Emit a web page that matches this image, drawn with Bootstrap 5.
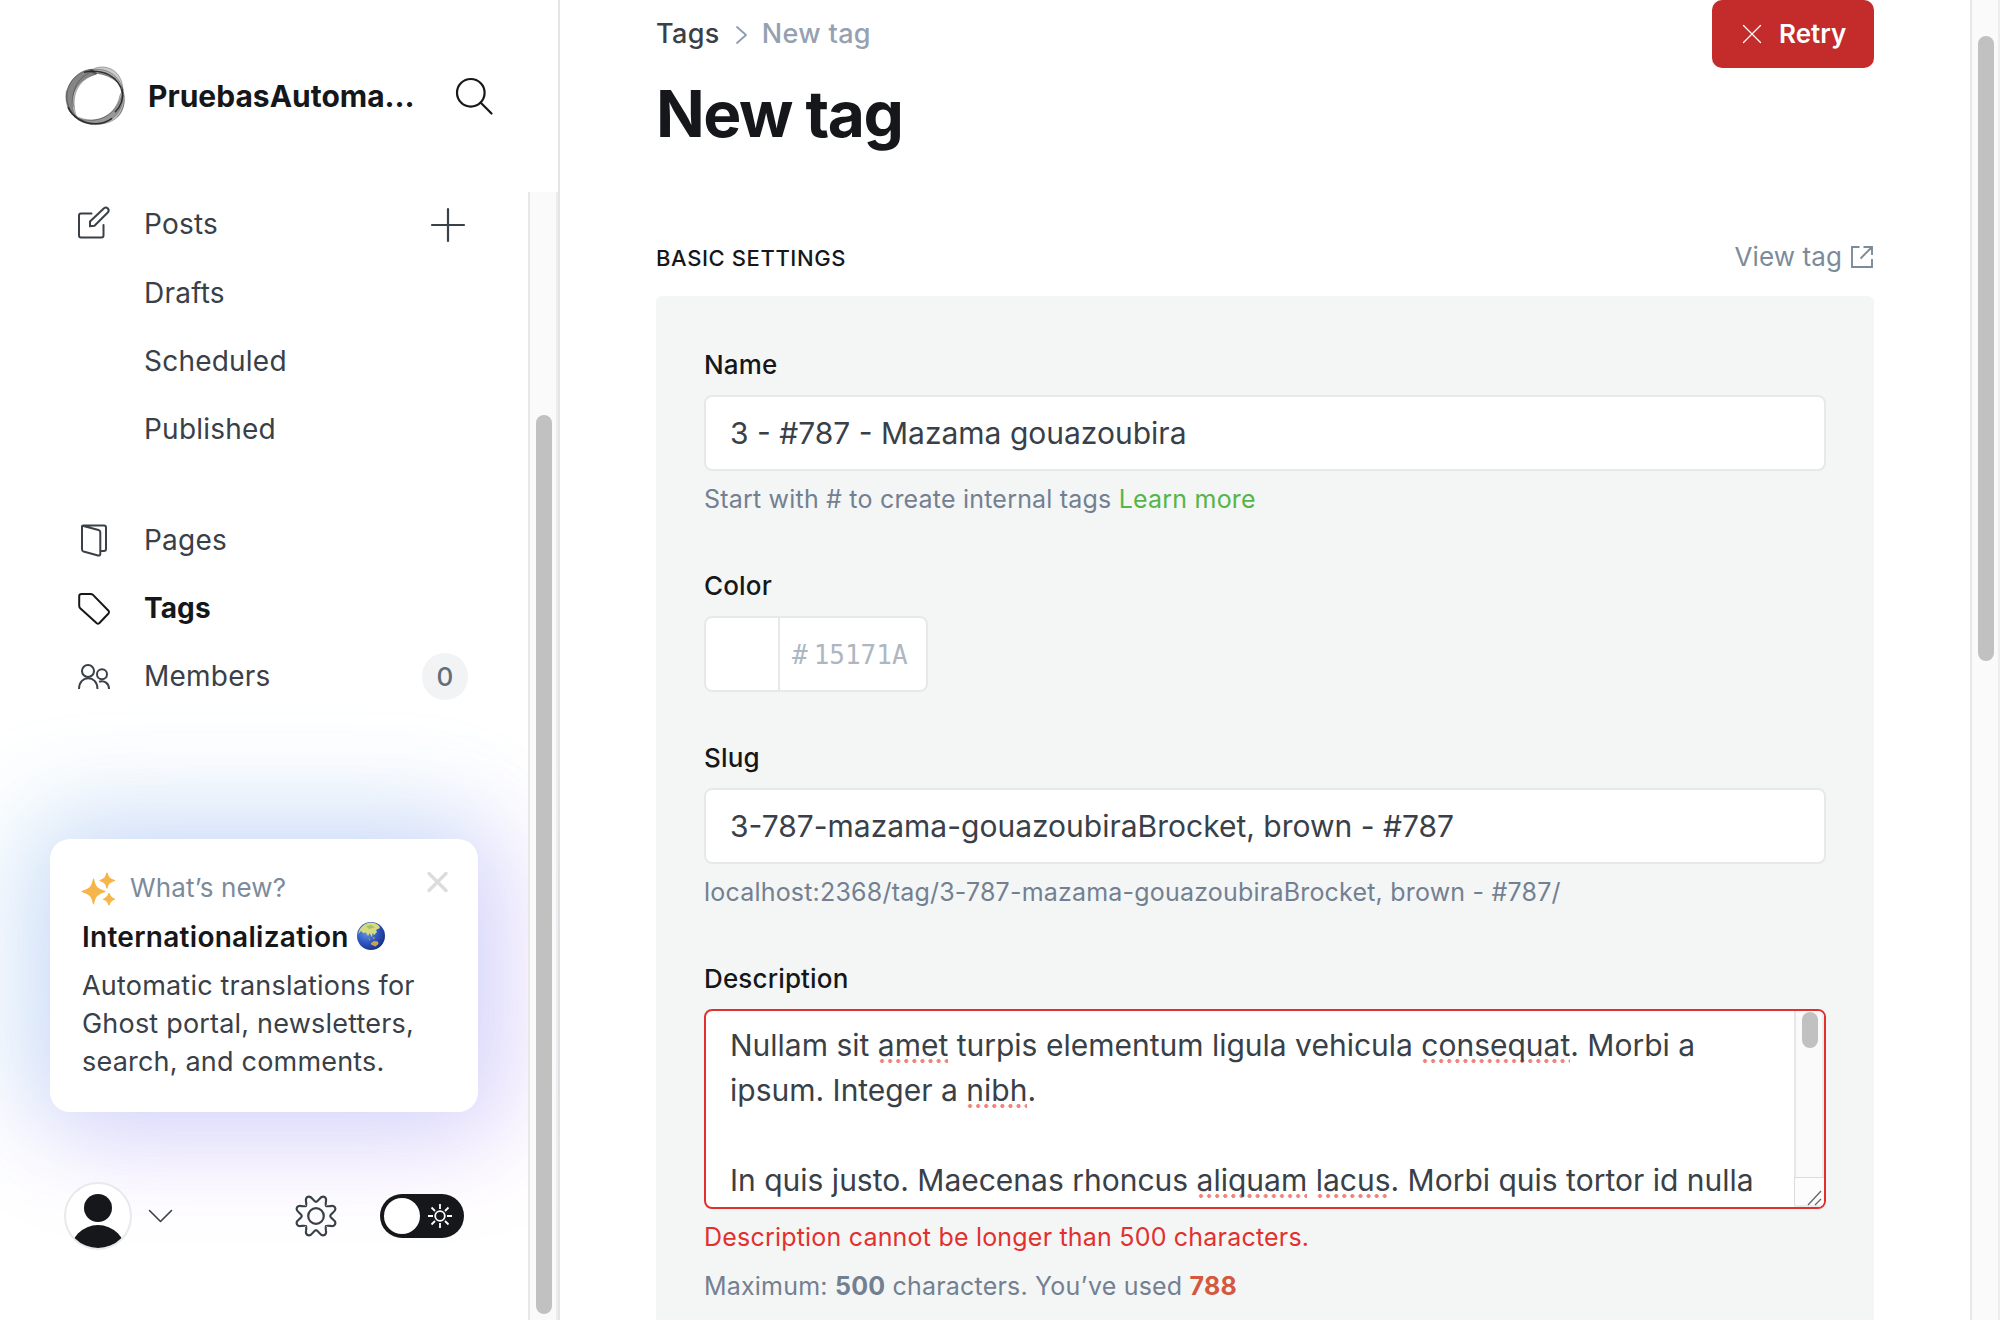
<!DOCTYPE html>
<html lang="en">
<head>
<meta charset="utf-8">
<meta name="viewport" content="width=device-width, initial-scale=1">
<title>New tag</title>
<link href="https://cdn.jsdelivr.net/npm/bootstrap@5.3.0/dist/css/bootstrap.min.css" rel="stylesheet">
<style>
body{font-family:Inter,"Liberation Sans",sans-serif;color:#394047;background:#fff;overflow:hidden;font-size:28px;-webkit-font-smoothing:antialiased}
svg{display:block;flex:none;overflow:visible}
a{text-decoration:none}
.ink{color:#15171a}
.shell{height:1320px;width:2000px}
.side{width:560px;border-right:2px solid #e5e5e5}
.side-head{height:192px;padding:66px 64px 0 65px}
.site-name{font-size:30px;font-weight:700;line-height:60px;margin-left:23px;width:308px;white-space:nowrap}
.search-icon{margin-top:12px}
.side-col{width:528px}
.nav-list{margin-top:-2px}
.nav-row{height:68px;padding:0 62px 0 78px}
.nav-row .nav-text{width:320px;line-height:70px;letter-spacing:.22px}
.nav-row svg{width:32px;margin-right:34px}
.nav-row svg.plus-icon{width:34px;margin-right:1px}
.nav-row.sub{padding-left:144px}
.nav-gap{margin-top:44px}
.nav-row .nav-text.active-text{letter-spacing:.1px}
.count{width:46px;height:47px;border-radius:24px;background:#f1f3f4;color:#626d79;font-size:26px;font-weight:500;line-height:47px}
.track{background:#fafafa;border-left:2px solid #e8e8e8;border-right:2px solid #ededed;width:30px;position:relative;z-index:1}
.thumb{width:16px;border-radius:8px;background:#c1c1c1}
.side-thumb{margin:223px 0 0 6px;height:899px}
.main-thumb{margin:36px 0 0 6px;height:625px}
.news{margin:129px 50px 0;width:428px;height:273px;border-radius:20px;background:#fff;padding:29px 30px 0 32px;box-shadow:-14px -12px 100px 16px rgba(85,215,226,.24),14px 12px 100px 16px rgba(196,105,250,.28)}
.news-kicker{font-size:26px;line-height:40px;height:38px;color:#7c8b9a;letter-spacing:.15px;margin-left:15px}
.news-title{font-size:28px;line-height:40px;height:38px;font-weight:600;letter-spacing:.28px;margin-top:12px}
.news-body{font-size:27px;line-height:38px;letter-spacing:.2px;margin-top:11px}
.foot{margin-top:70px;padding-left:64px;height:68px}
.avatar{width:68px;height:68px}
.switch{width:84px;height:44px;border-radius:22px;background:#15171a;padding:4px}
.knob{width:36px;height:36px;border-radius:50%;background:#fff}
.main-pane{width:1410px;padding:0 96px;overflow:hidden;position:relative;background:#fff}
.crumbs{height:66px;line-height:67px;font-size:27px;font-weight:500;letter-spacing:.35px}
.page-title{font-size:64px;line-height:72px;font-weight:700;letter-spacing:-1.5px;margin:12px 0 0}
.btn-retry{width:162px;height:68px;border-radius:10px;background:#c42b2b;color:#fff;font-size:26px;font-weight:600;padding:0 28px 1px 31px}
.btn-retry:hover{background:#c42b2b;color:#fff}
.head-block{height:150px;margin-bottom:88px}
.sec-head{height:40px;margin-bottom:18px}
.sec-title{font-size:22px;font-weight:500;line-height:40px;letter-spacing:.6px}
.view-link{font-size:26px;line-height:38px;color:#7c8b9a;letter-spacing:.1px}
.panel{background:#f4f6f6;border-radius:6px;padding:54px 48px 0;height:1100px}
.f-label{font-size:26px;line-height:30px;font-weight:500;color:#15171a;margin:0 0 15px;display:block;letter-spacing:.15px}
.f-label.next{margin-top:53px}
.field{display:block;height:76px;border:2px solid #e5e9ea;border-radius:8px;background:#fff;color:#394047;font-size:30px;padding:0 24px;line-height:72px;width:100%}
.field:focus{outline:0}
.help{font-size:25px;line-height:38px;color:#738091;margin:9px 0 0;letter-spacing:.2px}
.help.tally{margin-top:11px}
.color-box{width:224px;height:76px;border:2px solid #e5e9ea;border-radius:8px;background:#fff;margin-bottom:51px}
.swatch{width:74px;border-right:2px solid #e5e9ea}
.hex{font-family:"DejaVu Sans Mono",monospace;font-size:26px;line-height:74px;color:#aeb7c1;padding-left:12px;gap:6px}
.area{height:200px;border:2px solid #e2302f;border-radius:8px;background:#fff;overflow:hidden}
.area-text{font-size:30px;line-height:45px;padding:12px 0 0 24px;white-space:nowrap;width:1088px}
.sp{background:radial-gradient(circle at 4px 2px,#f2837a 1.7px,transparent 2.3px) 0 100%/8.1px 4px repeat-x;padding-bottom:0}
.area-bar{width:30px}
.area-bar .thumb{margin:1px 0 0 6px;height:36px}
.area-track{height:166px;border-left:2px solid #e8e8e8;border-right:2px solid #ededed;background:#fafafa}
.area-grip{border-left:1px solid #dcdcdc;border-top:1px solid #dcdcdc;border-bottom:2px solid #ededed;background:#fcfcfc;padding-right:2px}
</style>
<script src="https://cdn.jsdelivr.net/npm/bootstrap@5.3.0/dist/js/bootstrap.bundle.min.js"></script>
</head>
<body>
<div class="shell d-flex">
  <aside class="side d-flex flex-column flex-shrink-0">
    <div class="side-head d-flex align-items-start">
      <svg width="60" height="60" viewBox="0 .7 60 60" fill="#444" stroke="#222" stroke-opacity=".55" stroke-width=".6">
        <path fill-opacity=".5" d="M27 4C12 6 .5 18 1 34 2 44 6 49 11 52 3 38 7 14 32 8.500Z"/>
        <path fill-opacity=".3" d="M27 4C16 4 3 14 2 30 2 42 6 47 12 52 8 44 4 17 31 9Z"/>
        <path fill-opacity=".28" d="M26 5C36-2 57 1 58 25 54 16 44 9 27 7Z"/>
        <path fill-opacity=".18" d="M24 5.500C37 1 53 7 58 24 50 11 40 8 28 8Z"/>
        <path fill-opacity=".36" d="M57.500 25C62 41 57 57 34 59 22 60 14 56 9 51 24 60 50 55 55 30Z"/>
        <path fill-opacity=".3" d="M57.500 27C60 41 52 50 46 54 34 61 19 59 8 49 26 61 52 54 57.500 27Z"/>
        <path fill="none" stroke-opacity=".9" stroke-width="1.500" d="M19 7C38 3 54 11 57.500 28M3 42C7 52 19 59 31 58.500 37 58.500 43 56 47 53M57.500 24C58.500 32 56 41 50 47"/>
        <path fill="none" d="M1.500 25C0 33 3 43 9 50M9 42C5 28 12 12 26 7M58 26C62 35 58 45 52 52"/>
      </svg>
      <div class="site-name ink">PruebasAutoma…</div>
      <svg class="search-icon" width="36" height="37" viewBox="0 0 36 37" fill="none" stroke="#15171a" stroke-width="2.200"><circle cx="14.800" cy="14.800" r="13.800"/><path d="M24.800 24.800 35.500 35.500" stroke-linecap="round"/></svg>
    </div>
    <div class="d-flex flex-grow-1">
      <div class="side-col">
        <nav class="nav-list">
          <div class="nav-row d-flex align-items-center">
            <svg height="32" viewBox="0 1.500 32 32" fill="none" stroke="#394047" stroke-width="2" stroke-linecap="round" stroke-linejoin="round"><path d="M13.500 7H3Q1 7 1 9V29Q1 31 3 31H23.500Q25.500 31 25.500 29V18.500M12 15 26 1.700Q28 .3 29.800 2 31.500 4 30 5.800L16.500 19.300 12 19.800Z"/></svg>
            <span class="nav-text">Posts</span>
            <svg class="plus-icon ms-auto" height="34" viewBox="0 0 34 34" stroke="#394047" stroke-width="2.200" stroke-linecap="round"><path d="M1 18H33M17 2V34"/></svg>
          </div>
          <div class="nav-row sub"><span class="nav-text">Drafts</span></div>
          <div class="nav-row sub"><span class="nav-text">Scheduled</span></div>
          <div class="nav-row sub"><span class="nav-text">Published</span></div>
          <div class="nav-row nav-gap d-flex align-items-center">
            <svg height="32" viewBox="0 -.5 32 32" fill="none" stroke="#394047" stroke-width="2" stroke-linejoin="round"><path d="M22.500 26.500H26Q28 26.500 28 24.500V3Q28 1 26 1H5Q4 1 4 2V25Q4 26.500 5.500 27L20 31Q22.300 31.500 22.300 29.500V8Q22.300 6 20.500 5.500L4.500 1.300"/></svg>
            <span class="nav-text">Pages</span>
          </div>
          <div class="nav-row d-flex align-items-center ink">
            <svg height="32" viewBox="0 -.7 32 32" fill="none" stroke="#15171a" stroke-width="2" stroke-linejoin="round"><path d="M1.200 3.500Q1.200 1.200 3.500 1.200H12.500Q14 1.200 15 2.200L30.500 18Q31.600 19.500 30.500 20.800L21.200 30.500Q20 31.500 18.800 30.500L2.200 15.500Q1.200 14.500 1.200 13Z"/></svg>
            <span class="nav-text active-text fw-bold">Tags</span>
          </div>
          <div class="nav-row d-flex align-items-center pe-0">
            <svg height="26" viewBox="0 -.5 32 26" fill="none" stroke="#394047" stroke-width="2"><circle cx="10" cy="7.500" r="6"/><path d="M1 25.500C1 11 19.500 11 19.500 25.500"/><circle cx="24" cy="10.800" r="5"/><path d="M21 18.300C26.500 16.500 31 20 31 25.500"/></svg>
            <span class="nav-text me-0" style="width:278px">Members</span>
            <span class="count text-center flex-shrink-0">0</span>
          </div>
        </nav>
        <div class="news">
          <div class="d-flex">
            <svg width="33" height="32" viewBox="0 0 33 32" fill="#f5b54a" style="margin-top:5px"><path d="M11.500 6C13 14 15 16 23 18.500 15 21 13 23 11.500 31 10 23 8 21 0 18.500 8 16 10 14 11.500 6ZM25 0C26 4.500 27.500 6 32.500 7.500 27.500 9 26 10.500 25 15 24 10.500 22.500 9 18 7.500 22.500 6 24 4.500 25 0ZM27 20.500C28 24 29 25 32.500 26.300 29 27.500 28 28.500 27 32 26 28.500 25 27.500 21.500 26.300 25 25 26 24 27 20.500Z" stroke="#f5b54a" stroke-width="1.200" stroke-linejoin="round"/></svg>
            <span class="news-kicker">What’s new?</span>
            <svg class="ms-auto" width="21" height="20" viewBox="0 0 21 20" stroke="#dcdcdc" stroke-width="3.400" stroke-linecap="round" style="margin-top:4px"><path d="M2 1.500 19 18.500M19 1.500 2 18.500"/></svg>
          </div>
          <div class="news-title ink d-flex align-items-center">Internationalization
            <svg width="28" height="28" viewBox="0 0 28 28" style="margin:-2px 0 0 8px">
              <defs><radialGradient id="sea" cx=".35" cy=".35" r=".75"><stop offset="0" stop-color="#6f9be0"/><stop offset=".5" stop-color="#3059c6"/><stop offset="1" stop-color="#14297c"/></radialGradient><clipPath id="ball"><circle cx="14" cy="14" r="14"/></clipPath></defs>
              <circle cx="14" cy="14" r="14" fill="url(#sea)"/>
              <g clip-path="url(#ball)">
              <path fill="#d6dc7c" d="M3 7Q8 0 15 .5 22 1.500 23 6L19 8 20 10 17 13 15.500 11 15 15 12.500 11 11 14 9 10.500 6 11 4 9 1 12Z"/>
              <path fill="#c5a54b" d="M14 21 17 19 21 19.500 21.500 22 18.500 24.500 14 22.500ZM15.500 14.500 18 16 17 17.500ZM11 15.500 13.500 18 12.500 18.500Z"/>
              <path fill="#a9bf6c" d="M9 4 14 3 18 5.500 12 7Z"/>
              </g>
            </svg>
          </div>
          <div class="news-body">Automatic translations for<br>Ghost portal, newsletters,<br>search, and comments.</div>
        </div>
        <div class="foot d-flex align-items-center">
          <svg class="avatar" viewBox="0 0 68 68"><defs><clipPath id="face"><circle cx="34" cy="34" r="32"/></clipPath></defs><circle cx="34" cy="34" r="33" fill="#fff" stroke="#e9e9ec" stroke-width="2"/><g clip-path="url(#face)" fill="#15171a"><circle cx="34" cy="26" r="14"/><circle cx="34" cy="71" r="28"/></g></svg>
          <svg width="23" height="12" viewBox="0 0 23 12" fill="none" stroke="#394047" stroke-width="1.600" stroke-linecap="round" stroke-linejoin="round" style="margin-left:17px"><path d="M.5.5 11.500 11.500 22.500.5"/></svg>
          <svg width="40" height="40" viewBox="-20 -20 40 40" fill="none" stroke="#394047" stroke-width="2.200" style="margin-left:124px">
            <defs><path id="tooth" d="M14.200 0C14.200 2.300 19.400 3.600 19.400 7 19.400 10 16.500 10.300 15 10 12.500 9.700 10.400 9.400 10.040 10.040"/></defs>
            <use href="#tooth"/><use href="#tooth" transform="matrix(0 1 1 0 0 0)"/><use href="#tooth" transform="rotate(90)"/><use href="#tooth" transform="rotate(90) matrix(0 1 1 0 0 0)"/><use href="#tooth" transform="rotate(180)"/><use href="#tooth" transform="rotate(180) matrix(0 1 1 0 0 0)"/><use href="#tooth" transform="rotate(270)"/><use href="#tooth" transform="rotate(270) matrix(0 1 1 0 0 0)"/>
            <circle r="7.800" stroke-width="2.200"/>
          </svg>
          <div class="switch d-flex align-items-center" style="margin-left:44px"><div class="knob"></div>
            <svg width="24" height="24" viewBox="-12 -12 24 24" fill="none" stroke="#fff" stroke-width="1.800" style="margin-left:8px"><circle r="4.800"/><path d="M0-12V-7M0 12V7M-12 0H-7M12 0H7M-8.500-8.500-5-5M8.500 8.500 5 5M-8.500 8.500-5 5M8.500-8.500 5-5"/></svg>
          </div>
        </div>
      </div>
      <div class="track"><div class="thumb side-thumb float-start"></div></div>
    </div>
  </aside>
  <main class="main-pane flex-shrink-0">
    <div class="head-block d-flex justify-content-between align-items-start">
      <div>
        <div class="crumbs d-flex align-items-center"><a href="#" style="color:#394047">Tags</a>
          <svg width="11" height="18" viewBox="0 0 11 18" fill="none" stroke="#8e9cac" stroke-width="1.800" stroke-linecap="round" stroke-linejoin="round" style="margin:4px 15px 0 16px"><path d="M1 1 10 9 1 17"/></svg>
          <span style="color:#95a1b1">New tag</span></div>
        <h1 class="page-title ink">New tag</h1>
      </div>
      <button class="btn btn-retry d-flex align-items-center border-0"><svg width="18" height="18" viewBox="0 0 18 18" stroke="#fff" stroke-width="1.200" stroke-linecap="round" style="margin-right:18px"><path d="M.5.5 17.500 17.500M17.500.5.5 17.500"/></svg>Retry</button>
    </div>
    <div class="sec-head d-flex justify-content-between">
      <div class="sec-title ink">BASIC SETTINGS</div>
      <a href="#" class="view-link d-flex">View tag<svg width="22" height="22" viewBox="0 0 22 22" fill="none" stroke="#7c8b9a" stroke-width="1.900" style="margin:8px 1px 0 9px"><path d="M8.500 1H1V21H21V13M12.500 1H21V9M21 1 9.500 12.500"/></svg></a>
    </div>
    <section class="panel">
      <label class="f-label">Name</label>
      <input class="field" value="3 - #787 - Mazama gouazoubira">
      <p class="help">Start with # to create internal tags <a href="#" style="color:#57b548">Learn more</a></p>
      <label class="f-label next">Color</label>
      <div class="color-box d-flex"><div class="swatch"></div><div class="hex d-flex"><span>#</span><span>15171A</span></div></div>
      <label class="f-label">Slug</label>
      <input class="field" value="3-787-mazama-gouazoubiraBrocket, brown - #787">
      <p class="help">localhost:2368/tag/3-787-mazama-gouazoubiraBrocket, brown - #787/</p>
      <label class="f-label next">Description</label>
      <div class="area d-flex">
        <div class="area-text">Nullam sit <span class="sp">amet</span> turpis elementum ligula vehicula <span class="sp">consequat</span>. Morbi a<br>ipsum. Integer a <span class="sp">nibh</span>.<br><br>In quis justo. Maecenas rhoncus <span class="sp">aliquam</span> <span class="sp">lacus</span>. Morbi quis tortor id nulla</div>
        <div class="area-bar d-flex flex-column">
          <div class="area-track"><div class="thumb"></div></div>
          <div class="area-grip flex-grow-1 d-flex justify-content-end align-items-end"><svg width="14" height="14" viewBox="0 0 14 14" stroke="#666" stroke-width="1.300"><path d="M0 14 13 0M7 14 13 8"/></svg></div>
        </div>
      </div>
      <p class="help" style="color:#e2302f">Description cannot be longer than 500 characters.</p>
      <p class="help tally">Maximum: <b>500</b> characters. You’ve used <b style="color:#d4583f">788</b></p>
    </section>
  </main>
  <div class="track flex-shrink-0"><div class="thumb main-thumb float-start"></div></div>
</div>
</body>
</html>
